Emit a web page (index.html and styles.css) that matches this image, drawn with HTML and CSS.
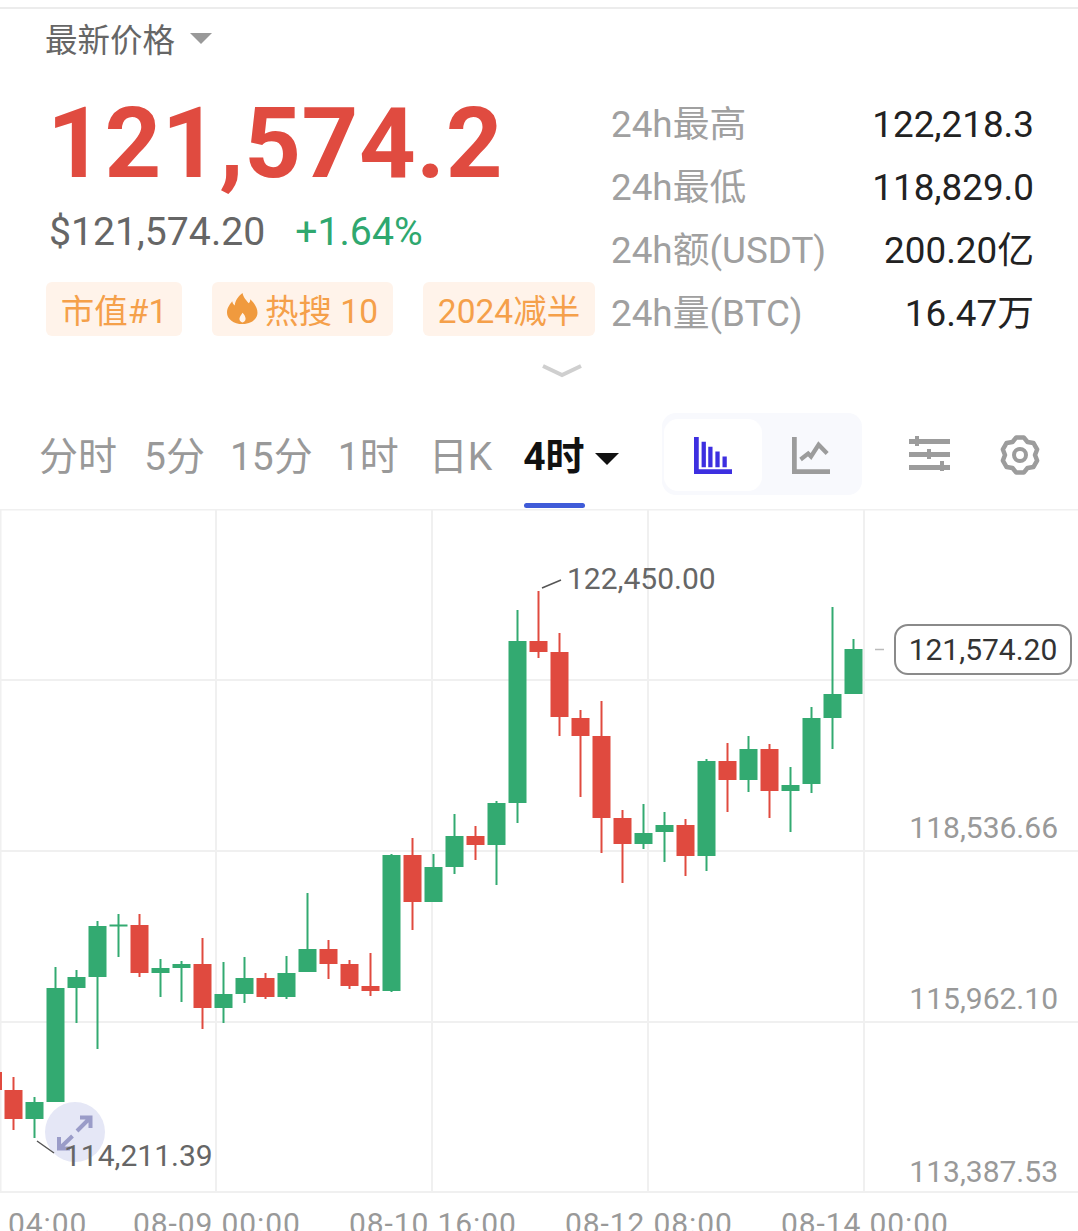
FILE: index.html
```html
<!DOCTYPE html>
<html lang="zh-CN">
<head>
    <meta charset="UTF-8">
    <meta name="viewport" content="width=device-width, initial-scale=1.0">
    <title>BTC 行情</title>
    <link rel="stylesheet" href="styles.css">
</head>
<body>
    <div class="page">
        <div class="price-type">
            <span>最新价格</span>
            <i class="caret-gray"></i>
        </div>

        <div class="summary">
            <div class="summary-left">
                <div class="last-price">121,574.2</div>
                <div class="sub-price">
                    <span class="usd">$121,574.20</span>
                    <span class="change">+1.64%</span>
                </div>
                <div class="tags">
                    <span class="tag tag-rank">市值#1</span>
                    <span class="tag tag-hot">
                        <svg class="flame" viewBox="0 0 30 30">
                            <path d="M15 0c1 5 4 7 6 10 1-1 1.500-2 1.500-4 4 4 7 8 7 13 0 6-6 11-14.500 11S0 25 0 19c0-5 3-8 5-11 .5 2 1 3 2.500 4C8 7 11 3 15 0z" fill="#f09a3e"/>
                            <path d="M15 19c2 2 3 4 3 6 0 2-1.500 3.500-3 3.500S12 27 12 25c0-2 2-4 3-6z" fill="#fff3ea"/>
                        </svg>
                        热搜 10
                    </span>
                    <span class="tag tag-halving">2024减半</span>
                </div>
            </div>
            <dl class="stats">
                <div class="stat"><dt>24h最高</dt><dd>122,218.3</dd></div>
                <div class="stat"><dt>24h最低</dt><dd>118,829.0</dd></div>
                <div class="stat"><dt>24h额(USDT)</dt><dd>200.20亿</dd></div>
                <div class="stat"><dt>24h量(BTC)</dt><dd>16.47万</dd></div>
            </dl>
        </div>

        <div class="expand">
            <svg width="42" height="14" viewBox="0 0 42 14">
                <path d="M2 2l19 9 19-9" fill="none" stroke="#cfcfcf" stroke-width="4"/>
            </svg>
        </div>

        <div class="toolbar">
            <div class="tabs">
                <span class="tab">分时</span>
                <span class="tab tab-five">5分</span>
                <span class="tab">15分</span>
                <span class="tab">1时</span>
                <span class="tab tab-day">日K</span>
                <span class="tab tab-active">4时<i class="caret-black"></i></span>
            </div>
            <div class="chart-type">
                <span class="chart-type-btn chart-type-on">
                    <svg width="38" height="37" viewBox="0 0 40 38" preserveAspectRatio="none">
                        <path d="M0 0h5v33h35v5H0z" fill="#3d2fe0"/>
                        <path d="M8 5h4.500v26H8zM15 10h4.500v21H15zM22.500 15H27v16h-4.500zM30 20h4.500v11H30z" fill="#3d2fe0"/>
                    </svg>
                </span>
                <span class="chart-type-btn">
                    <svg width="38" height="37" viewBox="0 0 40 38" preserveAspectRatio="none">
                        <path d="M0 0h5v33h35v5H0z" fill="#9c9c9c"/>
                        <path d="M9 23l8-6 3 3 8-12 9 9" fill="none" stroke="#9c9c9c" stroke-width="4.500"/>
                    </svg>
                </span>
            </div>
            <svg class="sliders" width="41" height="36" viewBox="0 0 41 36">
                <path d="M0 4h41v5H0zM0 17h41v5H0zM0 30h41v5H0z" fill="#9c9c9c"/>
                <path d="M6 1h4v10H6zM18 14h4v10h-4zM31 26h4v10h-4z" fill="#9c9c9c"/>
            </svg>
            <svg class="gear" width="40" height="40" viewBox="0 0 40 40">
                <path d="M16.260 2.390H23.740L27.500 7.010L33.380 7.960L37.120 14.440L35 20L37.120 25.560L33.380 32.040L27.500 32.990L23.740 37.610H16.260L12.500 32.990L6.620 32.040L2.880 25.560L5 20L2.880 14.440L6.620 7.960L12.500 7.010Z" fill="none" stroke="#9c9c9c" stroke-width="4.500" stroke-linejoin="round"/>
                <circle cx="20" cy="20" r="6" fill="none" stroke="#9c9c9c" stroke-width="4"/>
            </svg>
        </div>

        <div class="chart">
            <svg class="chart-svg" width="1078" height="722" viewBox="0 509 1078 722">
                <!-- grid -->
                <g class="grid">
                    <path d="M0 509.500H1078M0 680H1078M0 851H1078M0 1022H1078M0 1192H1078"/>
                    <path d="M.5 509V1192M216 509V1192M432 509V1192M648 509V1192M864 509V1192"/>
                </g>

                <!-- candles: wick then body -->
                <g class="down">
                    <rect x="0" y="1072" width="2" height="18"/>
                    <path d="M13.500 1077V1130"/><rect x="4.500" y="1090" width="18" height="29"/>
                    <path d="M139.500 914V977"/><rect x="130.500" y="925" width="18" height="48"/>
                    <path d="M202.500 938V1029"/><rect x="193.500" y="964" width="18" height="44"/>
                    <path d="M265.500 973V999"/><rect x="256.500" y="978" width="18" height="19"/>
                    <path d="M328.500 940V979"/><rect x="319.500" y="949" width="18" height="15"/>
                    <path d="M349.500 960V989"/><rect x="340.500" y="964" width="18" height="22"/>
                    <path d="M370.500 953V996"/><rect x="361.500" y="986" width="18" height="5"/>
                    <path d="M412.500 838V930"/><rect x="403.500" y="855" width="18" height="47"/>
                    <path d="M475.500 826V860"/><rect x="466.500" y="836" width="18" height="9"/>
                    <path d="M538.500 591V658"/><rect x="529.500" y="641" width="18" height="11"/>
                    <path d="M559.500 633V736"/><rect x="550.500" y="652" width="18" height="65"/>
                    <path d="M580.500 710V797"/><rect x="571.500" y="718" width="18" height="18"/>
                    <path d="M601.500 701V853"/><rect x="592.500" y="736" width="18" height="82"/>
                    <path d="M622.500 810V883"/><rect x="613.500" y="818" width="18" height="26"/>
                    <path d="M685.500 819V876"/><rect x="676.500" y="825" width="18" height="31"/>
                    <path d="M727.500 743V812"/><rect x="718.500" y="761" width="18" height="19"/>
                    <path d="M769.500 744V818"/><rect x="760.500" y="749" width="18" height="42"/>
                </g>
                <g class="up">
                    <path d="M34.500 1097V1138"/><rect x="25.500" y="1102" width="18" height="17"/>
                    <path d="M55.500 967V1102"/><rect x="46.500" y="988" width="18" height="114"/>
                    <path d="M76.500 970V1023"/><rect x="67.500" y="977" width="18" height="11"/>
                    <path d="M97.500 921V1049"/><rect x="88.500" y="926" width="18" height="51"/>
                    <path d="M118.500 914V957"/><rect x="109.500" y="924.500" width="18" height="2"/>
                    <path d="M160.500 959V997"/><rect x="151.500" y="968" width="18" height="5"/>
                    <path d="M181.500 961V1002"/><rect x="172.500" y="964" width="18" height="4"/>
                    <path d="M223.500 962V1023"/><rect x="214.500" y="994" width="18" height="14"/>
                    <path d="M244.500 957V1003"/><rect x="235.500" y="978" width="18" height="16"/>
                    <path d="M286.500 956V999"/><rect x="277.500" y="973" width="18" height="24"/>
                    <path d="M307.500 893V972"/><rect x="298.500" y="949" width="18" height="23"/>
                    <path d="M391.500 854V992"/><rect x="382.500" y="855" width="18" height="136"/>
                    <path d="M433.500 854V902"/><rect x="424.500" y="867" width="18" height="35"/>
                    <path d="M454.500 814V874"/><rect x="445.500" y="836" width="18" height="31"/>
                    <path d="M496.500 801V885"/><rect x="487.500" y="803" width="18" height="42"/>
                    <path d="M517.500 610V823"/><rect x="508.500" y="641" width="18" height="162"/>
                    <path d="M643.500 804V849"/><rect x="634.500" y="833" width="18" height="11"/>
                    <path d="M664.500 812V862"/><rect x="655.500" y="825" width="18" height="7"/>
                    <path d="M706.500 759V871"/><rect x="697.500" y="761" width="18" height="95"/>
                    <path d="M748.500 736V792"/><rect x="739.500" y="749" width="18" height="31"/>
                    <path d="M790.500 767V832"/><rect x="781.500" y="785" width="18" height="6"/>
                    <path d="M811.500 707V793"/><rect x="802.500" y="718" width="18" height="66"/>
                    <path d="M832.500 607V749"/><rect x="823.500" y="694" width="18" height="24"/>
                    <path d="M853.500 639V694"/><rect x="844.500" y="649" width="18" height="45"/>
                </g>

                <!-- fullscreen button, sits under the low label -->
                <circle cx="75" cy="1132" r="30" fill="#e5e7f6"/>
                <path class="full-arrow" d="M77 1131L90 1118M80 1117.500H90.500V1128M72.500 1136L60 1148M59 1137V1148.500H70"/>

                <!-- high / low marks -->
                <path class="mark" d="M542 588L561 580M37 1141L54 1153"/>
                <text class="mark-text" x="567" y="589">122,450.00</text>
                <text class="mark-text" x="64" y="1166">114,211.39</text>

                <!-- price axis -->
                <text class="axis-text" x="1058" y="838" text-anchor="end">118,536.66</text>
                <text class="axis-text" x="1058" y="1009" text-anchor="end">115,962.10</text>
                <text class="axis-text" x="1058" y="1182" text-anchor="end">113,387.53</text>

                <!-- time axis -->
                <text class="axis-text time-text" x="8" y="1234">04:00</text>
                <text class="axis-text time-text" x="133" y="1234">08-09 00:00</text>
                <text class="axis-text time-text" x="349" y="1234">08-10 16:00</text>
                <text class="axis-text time-text" x="565" y="1234">08-12 08:00</text>
                <text class="axis-text time-text" x="781" y="1234">08-14 00:00</text>

                <path d="M875 649.500H884" stroke="#bbb" stroke-width="1.500"/>
            </svg>
            <div class="now-price">121,574.20</div>
        </div>
    </div>
</body>
</html>
```

FILE: styles.css
```css
* {
    box-sizing: border-box;
}
body {
    margin: 0;
    background: white;
    font-family: Roboto, "Noto Sans CJK SC", sans-serif;
}
.page {
    width: 1078px;
    height: 1231px;
    overflow: hidden;
    padding-top: 7px;
    background: linear-gradient(#fff 7px, #ececec 7px, #ececec 9px, #fff 9px);
}
.price-type {
    display: flex;
    align-items: center;
    height: 60px;
    padding-left: 45px;
    font-size: 32.500px;
    color: #666;
}
.caret-gray {
    width: 0;
    height: 0;
    margin: 2px 0 0 15px;
    border-left: 11px solid transparent;
    border-right: 11px solid transparent;
    border-top: 11px solid #999;
}
.summary {
    display: flex;
    height: 271px;
}
.summary-left {
    width: 611px;
    padding: 15px 0 0 46px;
}
.last-price {
    height: 124px;
    padding-left: 1px;
    font-size: 99px;
    line-height: 122px;
    font-weight: 700;
    color: #e04b40;
    letter-spacing: .6px;
}
.sub-price {
    display: flex;
    gap: 30px;
    height: 60px;
    margin-top: -4px;
    padding-left: 3px;
    font-size: 39.200px;
    line-height: 60px;
}
.usd {
    color: #666;
}
.change {
    color: #2fa86f;
}
.tags {
    display: flex;
    gap: 30px;
    margin-top: 20px;
}
.tag {
    display: flex;
    align-items: center;
    justify-content: center;
    height: 54px;
    padding-bottom: 2px;
    background: #fff3ea;
    border-radius: 6px;
    font-size: 33.500px;
    color: #f5a04a;
}
.tag-rank {
    width: 136px;
}
.tag-hot {
    gap: 7px;
    width: 181px;
}
.tag-halving {
    width: 172px;
}
.flame {
    width: 31px;
    height: 31px;
}
.stats {
    flex: 1;
    margin: 0;
    padding: 26px 44px 0 0;
}
.stat {
    display: flex;
    justify-content: space-between;
    height: 63px;
    font-size: 36.800px;
    line-height: 63px;
}
.stat dt {
    color: #a0a0a0;
}
.stat dd {
    margin: 0;
    color: #222;
}
.expand {
    height: 39px;
    padding: 26px 0 0 541px;
    line-height: 0;
}
.toolbar {
    display: flex;
    align-items: flex-start;
    height: 132px;
    padding-left: 39px;
}
.tabs {
    display: flex;
    gap: 25px;
    width: 623px;
    padding-top: 52px;
}
.tab {
    position: relative;
    height: 79px;
    font-size: 39px;
    line-height: 56px;
    color: #999;
}
.tab-five {
    margin-left: 2px;
}
.tab-day {
    margin-left: 5px;
}
.tab-active {
    display: flex;
    margin-left: 6px;
    font-weight: 700;
    color: #111;
}
.tab-active::after {
    content: "";
    position: absolute;
    left: 1px;
    right: 34px;
    bottom: 0;
    height: 5px;
    border-radius: 3px;
    background: #3f5bd8;
}
.caret-black {
    width: 0;
    height: 0;
    margin: 24px 0 0 10px;
    border-left: 12px solid transparent;
    border-right: 12px solid transparent;
    border-top: 12px solid #111;
}
.chart-type {
    display: flex;
    width: 200px;
    height: 82px;
    margin-top: 36px;
    padding: 6px 2px;
    border-radius: 14px;
    background: #f8f9fd;
}
.chart-type-btn {
    display: flex;
    align-items: center;
    justify-content: center;
    width: 98px;
    height: 72px;
    border-radius: 14px;
}
.chart-type-on {
    background: white;
}
.sliders {
    margin: 58px 0 0 47px;
}
.gear {
    margin: 58px 0 0 50px;
}
.chart {
    position: relative;
    height: 722px;
}
.chart-svg {
    display: block;
}
.grid path {
    fill: none;
    stroke: #f0f0f0;
    stroke-width: 2;
}
.up rect {
    fill: #33aa71;
}
.up path {
    stroke: #33aa71;
    stroke-width: 2;
}
.down rect {
    fill: #e04a3f;
}
.down path {
    stroke: #e04a3f;
    stroke-width: 2;
}
.full-arrow {
    fill: none;
    stroke: #9a9cc8;
    stroke-width: 4;
}
.mark {
    fill: none;
    stroke: #555;
    stroke-width: 1.500;
}
.mark-text {
    font-size: 30px;
    fill: #666;
}
.axis-text {
    font-size: 30px;
    fill: #999;
}
.time-text {
    letter-spacing: .9px;
}
.now-price {
    position: absolute;
    left: 894px;
    top: 115px;
    width: 178px;
    height: 51px;
    border: 2px solid #8a8a8a;
    border-radius: 14px;
    background: white;
    font-size: 30px;
    line-height: 47px;
    text-align: center;
    color: #333;
}
```
